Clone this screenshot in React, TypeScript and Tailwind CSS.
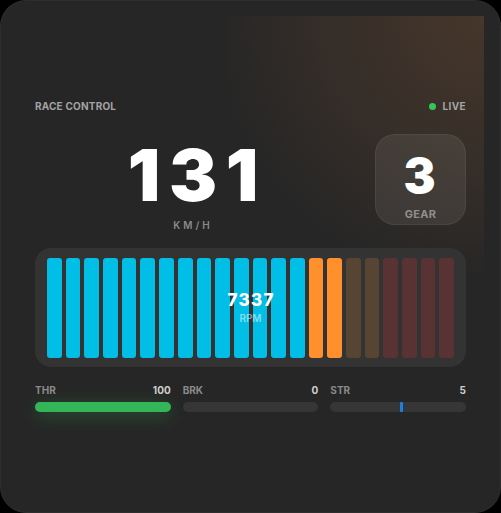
import React from 'react';

const rpmBars = [
  'cyan', 'cyan', 'cyan', 'cyan', 'cyan', 'cyan', 'cyan', 'cyan', 'cyan', 'cyan', 'cyan', 'cyan', 'cyan', 'cyan',
  'orange', 'orange',
  'orange-dim', 'orange-dim',
  'red-dim', 'red-dim', 'red-dim', 'red-dim'
];

const barClass: Record<string, string> = {
  cyan: 'bg-[#00bee6]',
  orange: 'bg-[#ff902b]',
  'orange-dim': 'bg-[#574432]',
  'red-dim': 'bg-[#593334]'
};

const App: React.FC = () => {
  return (
    <div className="h-screen w-full bg-black" style={{ fontFamily: 'Inter, "Noto Sans", sans-serif' }}>
      <div className="relative h-full w-full overflow-hidden rounded-[26px] border border-[#2e2e2e] bg-[#262626]">
        {/* warm glow in the top right corner */}
        <div className="absolute top-[15px] right-4 h-64 w-64 bg-[radial-gradient(circle_at_top_right,rgba(240,140,70,0.16),rgba(240,140,70,0.07)_45%,rgba(240,140,70,0)_75%)]" />

        <div className="relative flex h-full flex-col px-[34px] pt-[98px]">
          {/* header */}
          <div className="flex items-center justify-between">
            <span className="text-[10px] leading-[14px] font-bold tracking-[0.02em] text-[#a3a3a3]">RACE CONTROL</span>
            <div className="flex items-center gap-[6px]">
              <span className="h-[7px] w-[7px] rounded-full bg-[#30c856]" />
              <span className="text-[10px] leading-[14px] font-bold tracking-[0.04em] text-[#a3a3a3]">LIVE</span>
            </div>
          </div>

          {/* speed + gear */}
          <div className="mt-[21px] flex items-start gap-6">
            <div className="mt-[5px] flex flex-1 flex-col items-center">
              <span className="pl-[0.12em] text-[72px] leading-none font-black tracking-[0.12em] text-white">131</span>
              <span className="mt-[7px] text-[10px] leading-[14px] font-semibold tracking-[0.3em] text-[#8a8a8a]">KM/H</span>
            </div>
            <div className="flex h-[91px] w-[91px] flex-col items-center rounded-[20px] border border-white/[0.06] bg-white/[0.08] pt-[17px]">
              <span className="text-[48px] leading-none font-black tracking-[0.04em] text-white">3</span>
              <span className="mt-[7px] text-[11px] leading-[14px] font-bold tracking-[0.02em] text-[#8f8f8f]">GEAR</span>
            </div>
          </div>

          {/* rpm bar graph */}
          <div className="relative mt-4 flex h-[119px] gap-1 rounded-2xl bg-[#333333] px-3 pt-[10px] pb-[9px]">
            {rpmBars.map((kind, i) => (
              <div key={i} className={`flex-1 rounded-[3px] ${barClass[kind]}`} />
            ))}
            <div className="absolute inset-0 flex flex-col items-center justify-center">
              <span className="pl-[0.08em] text-[17px] leading-5 font-extrabold tracking-[0.08em] text-white">7337</span>
              <span className="mt-[1px] text-[10px] leading-[14px] font-semibold text-white/50">RPM</span>
            </div>
          </div>

          {/* pedal + steering inputs */}
          <div className="mt-4 grid grid-cols-3 gap-3">
            <div>
              <div className="flex items-center justify-between text-[10px] leading-[14px] font-bold">
                <span className="text-[#8a8a8a]">THR</span>
                <span className="text-[#cfcfcf]">100</span>
              </div>
              <div className="mt-[5px] h-[10px] rounded-full bg-[#363636]">
                <div className="h-full w-full rounded-full bg-[#33b657] shadow-[0_4px_18px_rgba(52,199,89,0.3)]" />
              </div>
            </div>
            <div>
              <div className="flex items-center justify-between text-[10px] leading-[14px] font-bold">
                <span className="text-[#8a8a8a]">BRK</span>
                <span className="text-[#cfcfcf]">0</span>
              </div>
              <div className="mt-[5px] h-[10px] rounded-full bg-[#363636]" />
            </div>
            <div>
              <div className="flex items-center justify-between text-[10px] leading-[14px] font-bold">
                <span className="text-[#8a8a8a]">STR</span>
                <span className="text-[#cfcfcf]">5</span>
              </div>
              <div className="relative mt-[5px] h-[10px] rounded-full bg-[#363636]">
                <div className="absolute top-0 left-[51.5%] h-full w-[3px] rounded-[1px] bg-[#1e7fe0]" />
              </div>
            </div>
          </div>
        </div>
      </div>
    </div>
  );
};

export default App;
